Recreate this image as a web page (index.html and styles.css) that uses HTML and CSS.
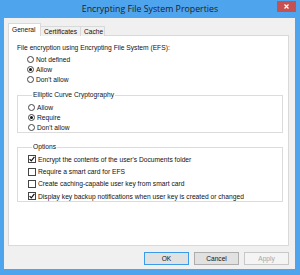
FILE: index.html
```html
<!DOCTYPE html>
<html>
<head>
<meta charset="utf-8">
<link rel="stylesheet" href="styles.css">
</head>
<body>
<div class="window">
  <div class="titlebar">
    <span></span>
    <span class="title">Encrypting File System Properties</span>
    <span class="close"><svg width="5" height="5" viewBox="0 0 5 5"><path d="M0.5 0.5L4.5 4.5M4.5 0.5L0.5 4.5" stroke="#fff" stroke-width="1.2"/></svg></span>
  </div>
  <div class="client">
    <div class="tabs">
      <div class="tab active">General</div>
      <div class="tab">Certificates</div>
      <div class="tab">Cache</div>
    </div>
    <div class="panel">
      <div class="heading">File encryption using Encrypting File System (EFS):</div>
      <div class="radios">
        <div class="row"><span class="radio"></span>Not defined</div>
        <div class="row"><span class="radio on"></span>Allow</div>
        <div class="row"><span class="radio"></span>Don't allow</div>
      </div>
      <fieldset class="group ecc">
        <legend>Elliptic Curve Cryptography</legend>
        <div class="row"><span class="radio"></span>Allow</div>
        <div class="row"><span class="radio on"></span>Require</div>
        <div class="row"><span class="radio"></span>Don't allow</div>
      </fieldset>
      <fieldset class="group opts">
        <legend>Options</legend>
        <div class="crow"><span class="check on"><svg width="6" height="6" viewBox="0 0 6 6"><path d="M0.6 3.1L2.3 4.8L5.4 0.9" fill="none" stroke="#111" stroke-width="1.2"/></svg></span>Encrypt the contents of the user's Documents folder</div>
        <div class="crow"><span class="check"></span>Require a smart card for EFS</div>
        <div class="crow"><span class="check"></span>Create caching-capable user key from smart card</div>
        <div class="crow"><span class="check on"><svg width="6" height="6" viewBox="0 0 6 6"><path d="M0.6 3.1L2.3 4.8L5.4 0.9" fill="none" stroke="#111" stroke-width="1.2"/></svg></span>Display key backup notifications when user key is created or changed</div>
      </fieldset>
    </div>
    <div class="buttons">
      <div class="btn default">OK</div>
      <div class="btn">Cancel</div>
      <div class="btn disabled">Apply</div>
    </div>
  </div>
</div>
</body>
</html>
```

FILE: styles.css
```css
* { box-sizing: border-box; }
html, body { margin: 0; padding: 0; }
body {
  font-family: "Liberation Sans", Arial, sans-serif;
  color: #111;
  background: #4fa4ee;
}
.window {
  width: 300px;
  height: 275px;
  background: #4fa4ee;
  display: flex;
  flex-direction: column;
}
.titlebar {
  height: 18px;
  display: grid;
  grid-template-columns: 1fr auto 1fr;
  align-items: start;
}
.title {
  font-size: 8.8px;
  line-height: 19px;
  color: #222;
  font-family: "Open Sans", "Liberation Sans", sans-serif;
}
.close {
  justify-self: end;
  margin: 1px 4px 0 0;
  width: 19px;
  height: 11px;
  background: #c75050;
  display: flex;
  align-items: center;
  justify-content: center;
}
.close svg { display: block; }
.client {
  flex: 1;
  margin: 0 5px 6px 4px;
  background: #f0f0f0;
  padding: 5px 6px 0 4px;
  display: flex;
  flex-direction: column;
}
.tabs {
  display: flex;
  align-items: flex-end;
  height: 13px;
  position: relative;
  z-index: 1;
  margin-bottom: -1px;
}
.tab {
  font-size: 6.6px;
  height: 10px;
  line-height: 9px;
  padding: 0 3px;
  border: 1px solid #d9d9d9;
  border-bottom: none;
  background: #f0f0f0;
  margin-left: -1px;
  white-space: nowrap;
}
.tab.active {
  height: 13px;
  line-height: 12px;
  background: #fff;
  margin-left: 0;
  padding: 0 3px;
  width: 33px;
}
.tab:nth-child(2) { width: 41px; }
.tab:nth-child(3) { width: 25px; }
.panel {
  height: 211px;
  background: #fff;
  border: 1px solid #d9d9d9;
  padding: 7px 5px 0 8px;
  font-size: 6.7px;
  white-space: nowrap;
}
.heading { line-height: 10px; }
.radios { padding-left: 10px; margin-top: 1px; }
.row {
  height: 10.4px;
  display: flex;
  align-items: center;
}
.ecc .row { height: 10px; }
.radio {
  width: 7px;
  height: 7px;
  border: 1px solid #444;
  border-radius: 50%;
  margin-right: 2px;
  display: flex;
  align-items: center;
  justify-content: center;
  background: #fff;
}
.radio.on::after {
  content: "";
  width: 3px;
  height: 3px;
  border-radius: 50%;
  background: #111;
}
.group {
  margin: 0;
  border: 1px solid #dcdcdc;
  min-width: 0;
}
.group legend {
  padding: 0 1px;
  margin-left: 4px;
  line-height: 8px;
}
.ecc {
  margin-top: 6px;
  height: 42px;
  padding: 3px 0 0 10px;
}
.opts {
  margin-top: 10px;
  height: 59px;
  padding: 2px 0 0 10px;
}
.crow {
  height: 12.3px;
  display: flex;
  align-items: center;
}
.check {
  width: 8px;
  height: 8px;
  border: 1px solid #444;
  background: #fff;
  margin-right: 2px;
  display: flex;
  align-items: center;
  justify-content: center;
}
.check svg { display: block; }
.buttons {
  display: flex;
  justify-content: flex-end;
  gap: 5px;
  margin-top: 6px;
  padding-right: 0;
}
.btn {
  width: 45px;
  height: 13px;
  border: 1px solid #adadad;
  background: #e1e1e1;
  font-size: 6.6px;
  line-height: 11px;
  text-align: center;
}
.btn.default { border-color: #3c9be8; }
.btn.disabled {
  border-color: #c8c8c8;
  background: #f4f4f4;
  color: #a6a6a6;
}
```
